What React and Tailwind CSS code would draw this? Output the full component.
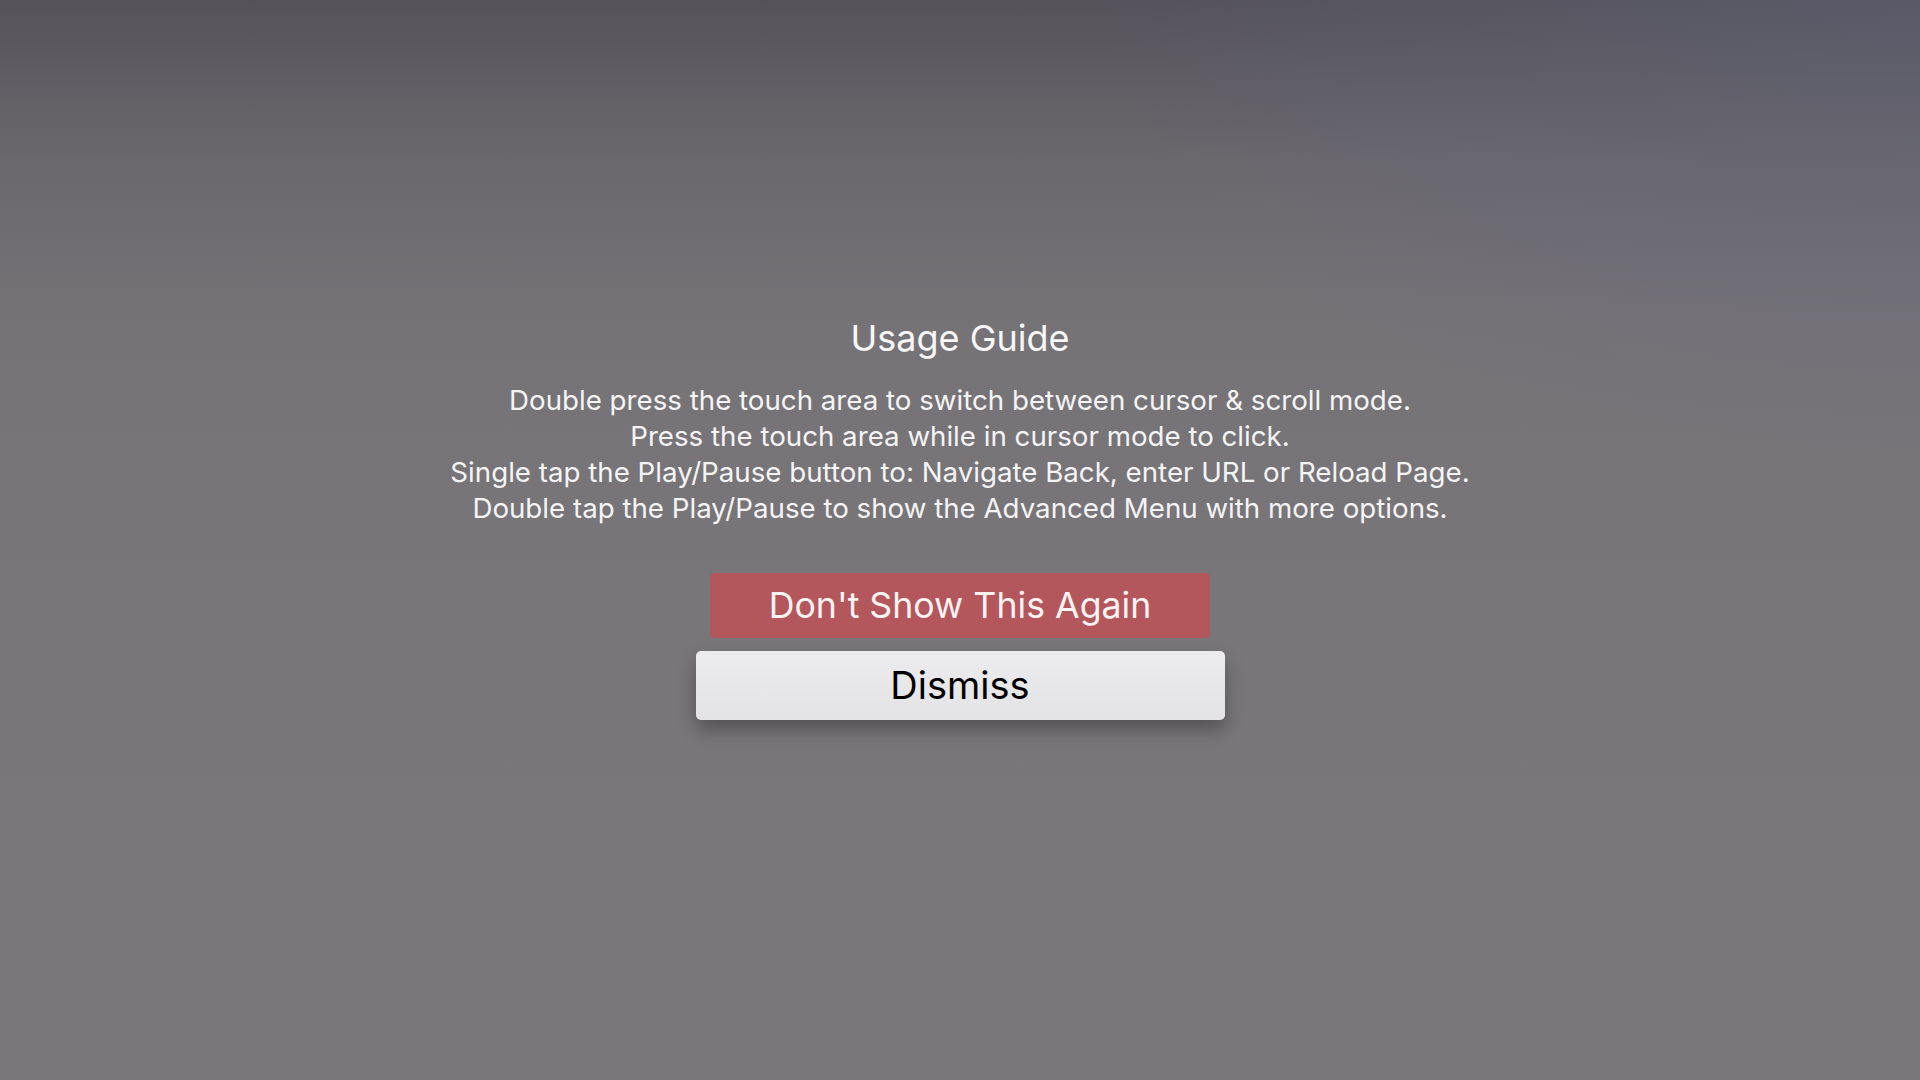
import React from "react";

const lines = [
  "Double press the touch area to switch between cursor & scroll mode.",
  "Press the touch area while in cursor mode to click.",
  "Single tap the Play/Pause button to: Navigate Back, enter URL or Reload Page.",
  "Double tap the Play/Pause to show the Advanced Menu with more options.",
];

const App = () => {
  return (
    <div className="relative w-full h-[1080px] overflow-hidden bg-[linear-gradient(180deg,#55525a_0%,#6b686d_15%,#767377_30%,#79767a_55%,#7a777a_100%)] font-['Inter','Roboto',sans-serif]">
      {/* bluish tint in the top right corner */}
      <div className="absolute inset-0 bg-[radial-gradient(ellipse_at_top_right,rgba(95,100,125,0.4)_0%,rgba(95,100,125,0)_30%)]"></div>

      <div className="relative flex flex-col items-center pt-[315px]">
        <h1 className="text-[36px] leading-[46px] text-[#f7f7f7] font-normal">
          Usage Guide
        </h1>

        <div className="mt-[21px] flex flex-col items-center text-[27.7px] leading-[36px] text-[#f4f4f4]">
          {lines.map((line, i) => (
            <p key={i}>{line}</p>
          ))}
        </div>

        <button className="mt-[47px] w-[500px] h-[65px] rounded-[4px] bg-[#b3575c] text-[35.7px] text-[#fbf3f3] flex items-center justify-center">
          Don't Show This Again
        </button>

        <button className="mt-[13px] w-[529px] h-[69px] rounded-[5px] bg-[linear-gradient(180deg,#ececee_0%,#e3e2e4_100%)] text-[38px] text-black flex items-center justify-center shadow-[0_10px_18px_rgba(0,0,0,0.3)]">
          Dismiss
        </button>
      </div>
    </div>
  );
};

export default App;
